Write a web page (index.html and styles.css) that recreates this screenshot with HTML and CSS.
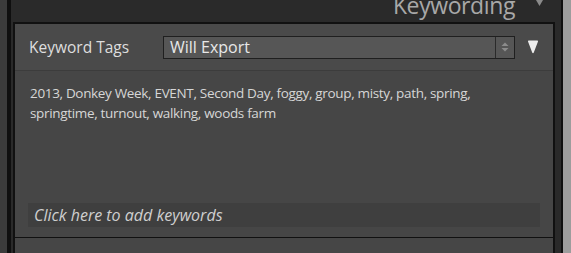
FILE: index.html
```html
<!DOCTYPE html>
<html lang="en">
<head>
    <meta charset="UTF-8">
    <title>Keywording</title>
    <link rel="stylesheet" href="styles.css">
</head>
<body>
    <div class="app">
        <div class="edge-left"></div>
        <div class="rule"></div>
        <div class="column">
            <div class="panel-title">
                <span class="title-text">Keywording</span>
                <svg class="title-arrow" width="7" height="6" viewBox="0 0 7 6"><path d="M0 0 L7 0 L3.5 6 Z" fill="#8a8a8a"/></svg>
            </div>
            <div class="panel">
                <div class="tag-row">
                    <label class="tag-label">Keyword Tags</label>
                    <div class="select">
                        <span class="select-value">Will Export</span>
                        <div class="stepper">
                            <svg width="12" height="16" viewBox="0 0 12 16">
                                <path d="M2.5 7 L6 3.5 L9.5 7 Z" fill="#8c8c8c"/>
                                <path d="M2.5 9 L6 12.5 L9.5 9 Z" fill="#8c8c8c"/>
                            </svg>
                        </div>
                    </div>
                    <svg class="menu-arrow" width="12" height="14" viewBox="0 0 12 14"><path d="M1 1.5 Q0.5 0.5 2 0.5 L10 0.5 Q11.5 0.5 11 1.5 L6.8 12.5 Q6 13.8 5.2 12.5 Z" fill="#ededed"/></svg>
                </div>
                <div class="keywords">
                    2013, Donkey Week, EVENT, Second Day, foggy, group, misty, path, spring,
                    springtime, turnout, walking, woods farm
                </div>
                <div class="add-box">Click here to add keywords</div>
            </div>
            <div class="next-panel"></div>
        </div>
        <div class="rule rule-right"></div>
        <div class="edge-right"></div>
    </div>
</body>
</html>
```

FILE: styles.css
```css
body {
    margin: 0;
    background-color: #464646;
    font-family: "Open Sans", "Liberation Sans", sans-serif;
}

.app {
    display: flex;
    height: 253px;
    overflow: hidden;
}

.edge-left {
    width: 7px;
    background-color: #3b3b3b;
}

.rule {
    width: 4px;
    background-color: #0f0f0f;
}

.rule-right {
    width: 2px;
}

.edge-right {
    width: 8px;
    background-color: #9d9d9d;
}

.column {
    flex: 1;
    display: flex;
    flex-direction: column;
    background-color: #2a2a2a;
    padding: 0 6px 0 2px;
}

.panel-title {
    height: 22px;
    display: flex;
    justify-content: flex-end;
    align-items: flex-start;
    overflow: hidden;
    padding-right: 12px;
}

.title-text {
    font-size: 23px;
    letter-spacing: -0.4px;
    color: #a8a8a8;
    line-height: 1;
    margin-top: -6px;
    margin-right: 21px;
}

.panel {
    background-color: #464646;
    border: 2px solid #111;
    border-bottom-width: 1px;
    display: flex;
    flex-direction: column;
    height: 213px;
}

.tag-row {
    display: flex;
    align-items: center;
    height: 46px;
    padding: 0 14px 0 14px;
    border-bottom: 1px solid #3c3c3c;
    background-color: #4a4a4a;
}

.tag-label {
    font-size: 15.5px;
    color: #dedede;
    width: 134px;
}

.select {
    flex: 1;
    display: flex;
    height: 21px;
    border: 1px solid #1f1f1f;
    background-color: #565656;
}

.select-value {
    flex: 1;
    font-size: 16px;
    color: #e8e8e8;
    line-height: 21px;
    padding-left: 6px;
}

.stepper {
    width: 18px;
    border-left: 1px solid #2a2a2a;
    display: flex;
    align-items: center;
    justify-content: center;
}

.menu-arrow {
    margin-left: 12px;
}

.keywords {
    font-size: 13.5px;
    letter-spacing: -0.33px;
    line-height: 20px;
    color: #d6d6d6;
    padding: 12px 14px 0 15px;
    flex: 1;
}

.add-box {
    margin: 0 13px 10px 13px;
    height: 22px;
    border: 1px solid #3f3f3f;
    background-color: #3f3f3f;
    font-style: italic;
    font-size: 16px;
    line-height: 22px;
    color: #cfcfcf;
    padding-left: 5px;
}

.next-panel {
    flex: 1;
    background-color: #464646;
    border-left: 2px solid #111;
    border-right: 2px solid #111;
}
```
